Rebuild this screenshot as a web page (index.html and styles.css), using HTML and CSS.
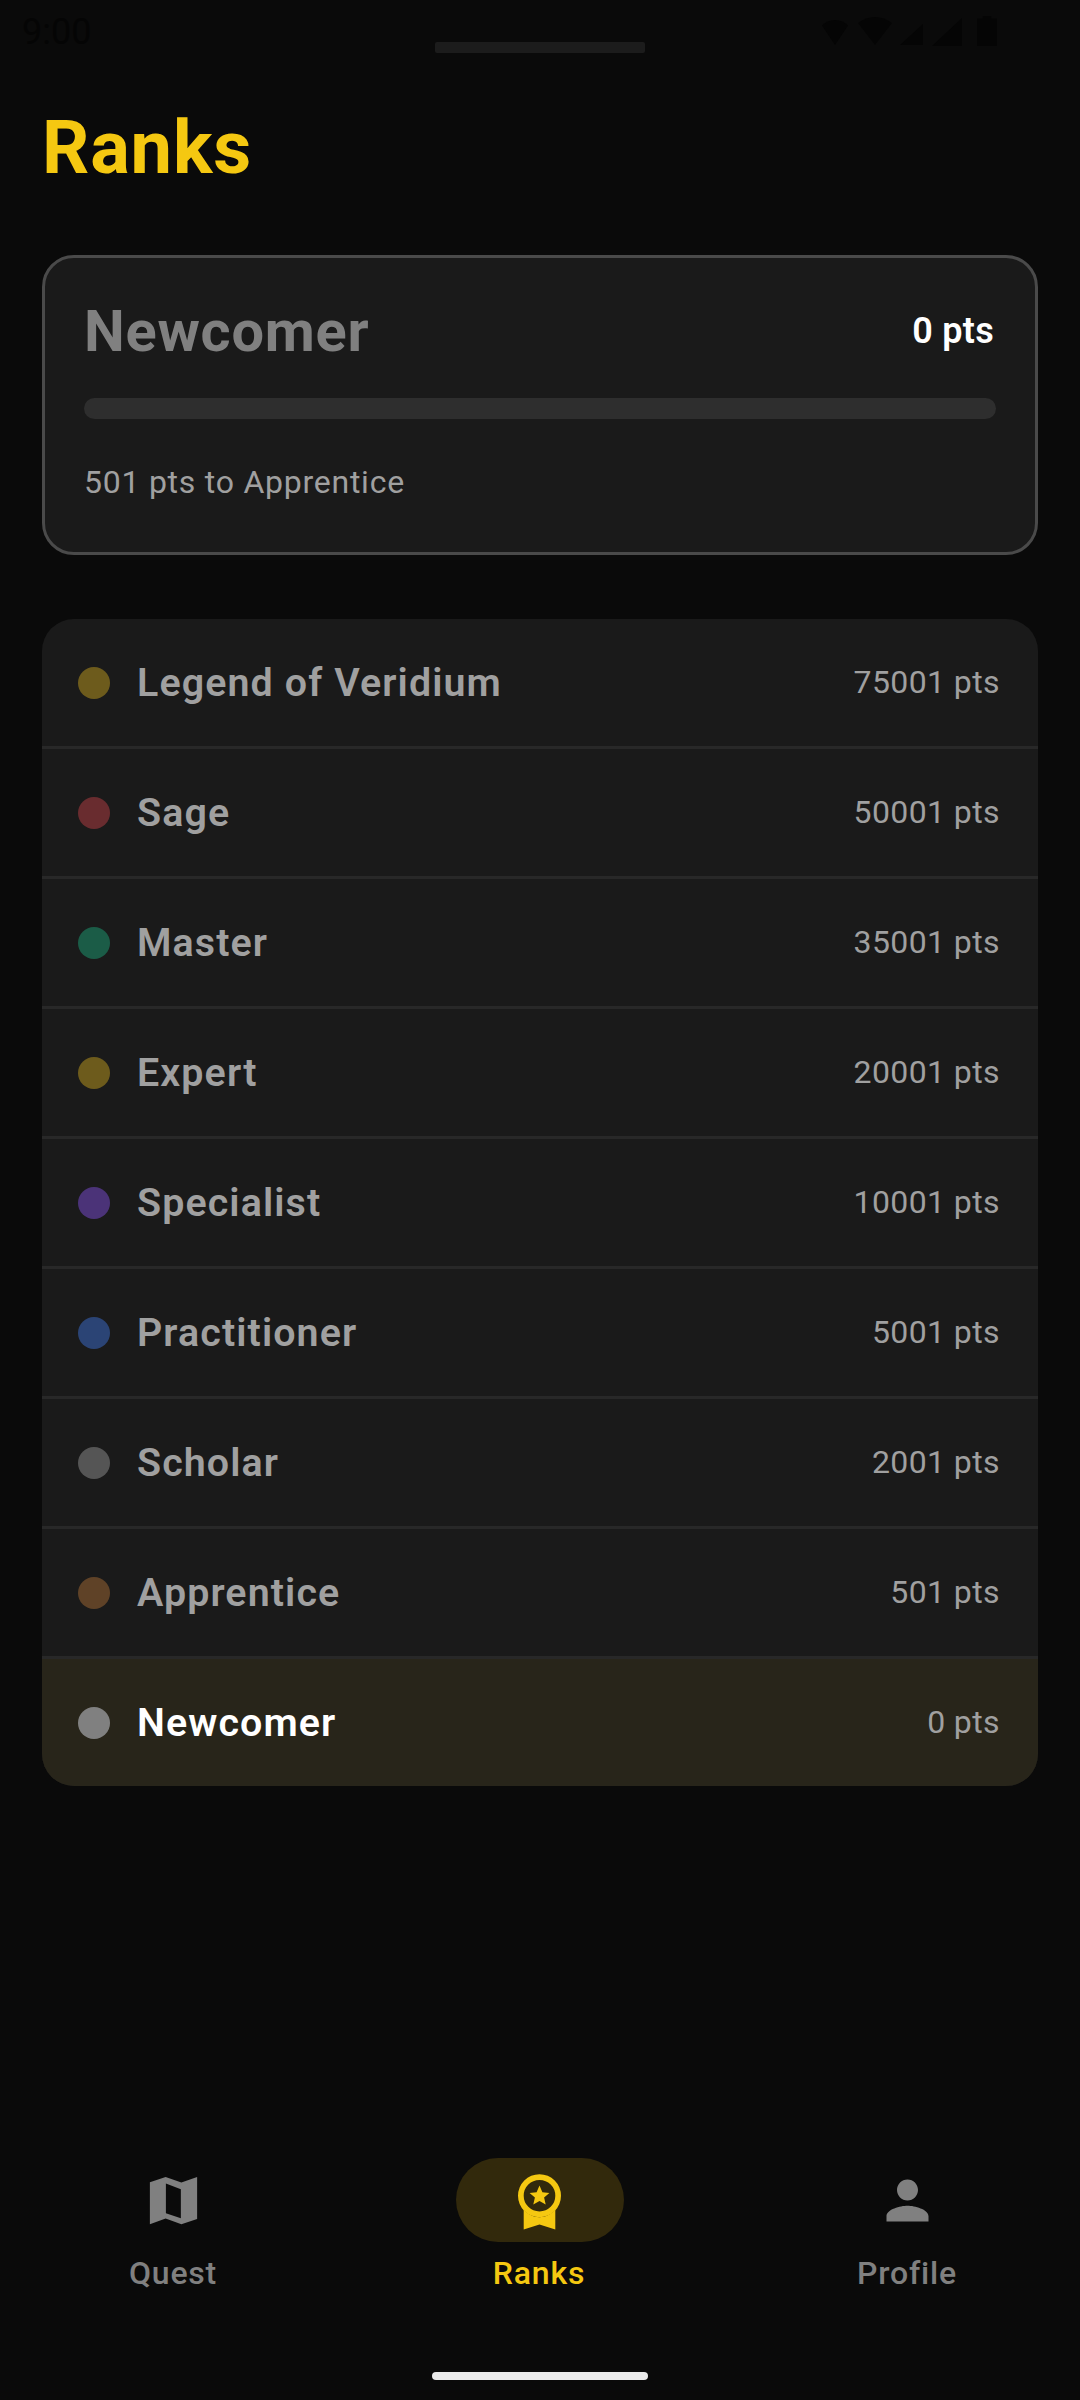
FILE: index.html
```html
<!DOCTYPE html>
<html lang="en">
<head>
<meta charset="utf-8">
<title>Ranks</title>
<link rel="stylesheet" href="styles.css">
</head>
<body>
<div class="screen">
  <header class="status">
    <span class="clock">9:00</span>
    <div class="camera"></div>
    <div class="status-icons">
      <svg class="si si-a" viewBox="2 3 20 18" preserveAspectRatio="none"><path d="M12 3C8 3 4.500 4.500 2 7l10 14L22 7c-2.500-2.500-6-4-10-4z"/></svg>
      <svg class="si si-b" viewBox="1 3 22 19" preserveAspectRatio="none"><path d="M12 3C8 3 4.500 4.500 1 7l11 15L23 7c-3.500-2.500-7-4-11-4z"/></svg>
      <svg class="si si-c" viewBox="2 3 20 19" preserveAspectRatio="none"><path d="M22 3v19H2z"/></svg>
      <svg class="si si-d" viewBox="2 2 20 20" preserveAspectRatio="none"><path d="M22 2v20H2z"/></svg>
      <svg class="si si-e" viewBox="0 1 14 23" preserveAspectRatio="none"><path d="M4 3V1h6v2h4v21H0V3z"/></svg>
    </div>
  </header>

  <h1 class="title">Ranks</h1>

  <section class="summary">
    <div class="summary-head">
      <span class="summary-rank">Newcomer</span>
      <span class="summary-pts">0 pts</span>
    </div>
    <div class="track"></div>
    <p class="summary-next">501 pts to Apprentice</p>
  </section>

  <ul class="ranks">
    <li class="rank"><span class="dot dot-legend"></span><span class="rank-name">Legend of Veridium</span><span class="rank-pts">75001 pts</span></li>
    <li class="rank"><span class="dot dot-sage"></span><span class="rank-name">Sage</span><span class="rank-pts">50001 pts</span></li>
    <li class="rank"><span class="dot dot-master"></span><span class="rank-name">Master</span><span class="rank-pts">35001 pts</span></li>
    <li class="rank"><span class="dot dot-expert"></span><span class="rank-name">Expert</span><span class="rank-pts">20001 pts</span></li>
    <li class="rank"><span class="dot dot-specialist"></span><span class="rank-name">Specialist</span><span class="rank-pts">10001 pts</span></li>
    <li class="rank"><span class="dot dot-practitioner"></span><span class="rank-name">Practitioner</span><span class="rank-pts">5001 pts</span></li>
    <li class="rank"><span class="dot dot-scholar"></span><span class="rank-name">Scholar</span><span class="rank-pts">2001 pts</span></li>
    <li class="rank"><span class="dot dot-apprentice"></span><span class="rank-name">Apprentice</span><span class="rank-pts">501 pts</span></li>
    <li class="rank rank-current"><span class="dot dot-newcomer"></span><span class="rank-name">Newcomer</span><span class="rank-pts">0 pts</span></li>
  </ul>

  <nav class="nav">
    <div class="nav-item">
      <div class="nav-icon">
        <svg width="63" height="63" viewBox="0 0 24 24"><path fill-rule="evenodd" d="M21 3l-6 2.100L9 3 3 5v16l6-2.100 6 2.100 6-2V3zM14.800 18.800l-5.700-1.900V5.500l5.700 2.200v11.100z"/></svg>
      </div>
      <span class="nav-label">Quest</span>
    </div>
    <div class="nav-item nav-item-active">
      <div class="nav-icon">
        <svg class="medal" width="63" height="63" viewBox="0 0 63 63"><path fill-rule="evenodd" d="M31.500 5.200a21.500 21.500 0 1 1 0 43 21.500 21.500 0 0 1 0-43zm0 5.700a15.800 15.800 0 1 0 0 31.600 15.800 15.800 0 0 0 0-31.600z"/><path d="M15.700 41c4 4 9.500 7.200 15.800 7.200S43.300 45 47.300 41v19.500l-15.800-5-15.800 5z"/><path d="M31.500 16.500l2.900 6.700 7 .7-5.300 4.700 1.600 7-6.200-3.700-6.200 3.700 1.600-7-5.300-4.700 7-.7z"/></svg>
      </div>
      <span class="nav-label">Ranks</span>
    </div>
    <div class="nav-item">
      <div class="nav-icon">
        <svg width="63" height="63" viewBox="0 0 24 24"><path d="M12 12c2.210 0 4-1.790 4-4s-1.790-4-4-4-4 1.790-4 4 1.790 4 4 4zm0 2c-2.670 0-8 1.340-8 4v2h16v-2c0-2.660-5.330-4-8-4z"/></svg>
      </div>
      <span class="nav-label">Profile</span>
    </div>
  </nav>

  <div class="home-bar"></div>
</div>
</body>
</html>
```

FILE: styles.css
```css
* { box-sizing: border-box; }
html, body { margin: 0; padding: 0; background: #0a0a0a; }
.screen {
  width: 1080px;
  height: 2400px;
  display: flex;
  flex-direction: column;
  font-family: Roboto, "Liberation Sans", sans-serif;
  overflow: hidden;
  background: #0a0a0a;
}
.status {
  height: 64px;
  flex: none;
  padding: 14px 83px 0 22px;
  display: flex;
  align-items: flex-start;
  justify-content: space-between;
  position: relative;
}
.clock { font-size: 36px; line-height: 36px; color: #050505; }
.camera {
  position: absolute;
  left: 435px;
  top: 42px;
  width: 210px;
  height: 11px;
  border-radius: 2px;
  background: #1c1c1c;
}
.status-icons { display: flex; align-items: flex-end; height: 31px; fill: #050505; }
.si { display: block; }
.si-a { width: 26px; height: 25px; margin-right: 10px; }
.si-b { width: 34px; height: 28px; margin-right: 8px; }
.si-c { width: 23px; height: 21px; margin-right: 9px; }
.si-d { width: 30px; height: 28px; margin-right: 15px; margin-bottom: -1px; }
.si-e { width: 20px; height: 30px; margin-bottom: -1px; }
.title {
  margin: 41px 0 0 42px;
  height: 87px;
  font-size: 74px;
  line-height: 86px;
  font-weight: 700;
  letter-spacing: 0.8px;
  color: #f5c811;
}
.summary {
  margin: 63px 42px 0;
  height: 300px;
  flex: none;
  padding: 41px 39px 0;
  background: #1a1a1a;
  border: 3px solid #4a4a4a;
  border-radius: 32px;
}
.summary-head { display: flex; justify-content: space-between; align-items: center; height: 64px; }
.summary-rank { font-size: 57.750px; font-weight: 700; color: #808080; letter-spacing: 0.75px; }
.summary-pts { font-size: 36px; font-weight: 600; color: #ffffff; letter-spacing: 0.3px; margin-right: 2px; }
.track { margin-top: 35px; height: 21px; border-radius: 11px; background: #2e2e2e; }
.summary-next { margin: 43px 0 0; font-size: 32px; line-height: 40px; color: #a0a0a0; letter-spacing: 0.75px; }
.ranks {
  list-style: none;
  margin: 64px 42px 0;
  padding: 0;
  flex: none;
  border-radius: 32px;
  overflow: hidden;
  background: #1a1a1a;
}
.rank {
  height: 130px;
  display: flex;
  align-items: center;
  padding: 0 38px 0 36px;
  border-bottom: 3px solid #282828;
}
.rank:last-child { border-bottom: 0; height: 127px; }
.rank-current { background: #28251a; }
.dot { width: 32px; height: 32px; border-radius: 50%; flex: none; margin-right: 27px; }
.dot-legend { background: #6d5b1c; }
.dot-sage { background: #692c2f; }
.dot-master { background: #1b5c47; }
.dot-expert { background: #6d5b1c; }
.dot-specialist { background: #4b3378; }
.dot-practitioner { background: #2b4475; }
.dot-scholar { background: #555555; }
.dot-apprentice { background: #5f4227; }
.dot-newcomer { background: #808080; }
.rank-name { flex: 1; font-size: 39.4px; font-weight: 600; color: #a0a0a0; letter-spacing: 1.1px; }
.rank-current .rank-name { color: #ffffff; }
.rank-pts { font-size: 32px; color: #a0a0a0; letter-spacing: 0.4px; margin-bottom: 2px; }
.nav {
  position: absolute;
  left: 0;
  top: 2158px;
  width: 1080px;
  display: grid;
  grid-template-columns: repeat(3, 367px);
  justify-content: center;
}
.nav-item { display: flex; flex-direction: column; align-items: center; fill: #808080; color: #808080; }
.nav-icon {
  width: 168px;
  height: 84px;
  border-radius: 42px;
  display: flex;
  align-items: center;
  justify-content: center;
}
.nav-item-active { fill: #f5c811; color: #f5c811; }
.nav-item-active .nav-icon { background: #32290c; }
.medal { position: relative; left: -1px; }
.nav-label { margin-top: 11px; font-size: 32px; line-height: 40px; font-weight: 500; letter-spacing: 0.8px; }
.nav-item-active .nav-label { margin-right: 2px; }
.home-bar {
  position: absolute;
  left: 432px;
  top: 2372px;
  width: 216px;
  height: 8px;
  border-radius: 4px;
  background: #ebebeb;
}
```
